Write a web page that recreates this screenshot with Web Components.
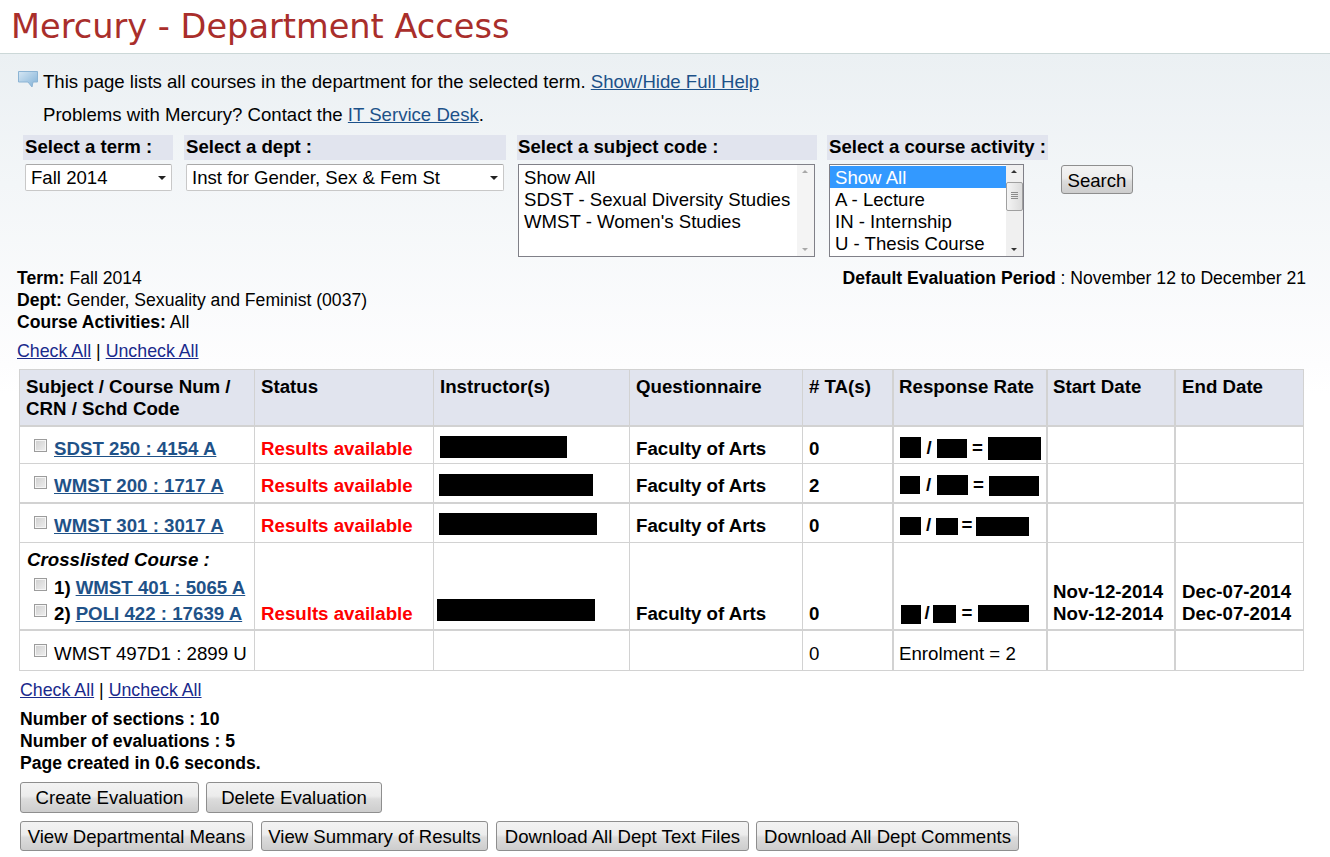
<!DOCTYPE html>
<html lang="en">
<head>
<meta charset="utf-8">
<title>Mercury - Department Access</title>
<style>
    html, body{ margin: 0; background: #fff; }
    body{ font: 18.6px/22px "Liberation Sans", Arial, sans-serif; color: #000; }
    .r{ color: #f00; font-weight: bold; }
    .b{ font-weight: bold; }
</style>
</head>
<body>

<mer-header>Mercury - Department Access</mer-header>

<mer-page>
    <mer-help></mer-help>

    <mer-filters>
        <mer-field label="Select a term :" style="--w:150px;--in:2px;">
            <mer-select style="--w:147px;">Fall 2014</mer-select>
        </mer-field>
        <mer-field label="Select a dept :" style="--w:322px;--in:2px;margin-left:11px;">
            <mer-select style="--w:318px;">Inst for Gender, Sex &amp; Fem St</mer-select>
        </mer-field>
        <mer-field label="Select a subject code :" style="--w:300px;--in:1px;margin-left:11px;">
            <mer-listbox style="--w:297px;">
                <div>Show All</div>
                <div>SDST - Sexual Diversity Studies</div>
                <div>WMST - Women's Studies</div>
            </mer-listbox>
        </mer-field>
        <mer-field label="Select a course activity :" style="--w:221px;--in:2px;margin-left:10px;">
            <mer-listbox active style="--w:195px;">
                <div>Show All</div>
                <div>A - Lecture</div>
                <div>IN - Internship</div>
                <div>U - Thesis Course</div>
            </mer-listbox>
        </mer-field>
        <mer-button style="--w:72px;--h:29px;--pt:2px;margin:30px 0 0 13px;">Search</mer-button>
    </mer-filters>

    <mer-summary></mer-summary>

    <mer-checks style="margin:7px 0 7px 17px;"></mer-checks>

    <mer-table>
        <mer-row head>
            <mer-cell>Subject / Course Num / CRN / Schd Code</mer-cell>
            <mer-cell>Status</mer-cell>
            <mer-cell>Instructor(s)</mer-cell>
            <mer-cell>Questionnaire</mer-cell>
            <mer-cell>#&nbsp;TA(s)</mer-cell>
            <mer-cell>Response Rate</mer-cell>
            <mer-cell>Start Date</mer-cell>
            <mer-cell>End Date</mer-cell>
        </mer-row>

        <mer-row style="--h:37px;">
            <mer-cell><mer-course link>SDST 250 : 4154 A</mer-course></mer-cell>
            <mer-cell class="r">Results available</mer-cell>
            <mer-cell><mer-block style="--w:127px;--h:22px;--x:0px;--y:-2px;"></mer-block></mer-cell>
            <mer-cell class="b">Faculty of Arts</mer-cell>
            <mer-cell class="b">0</mer-cell>
            <mer-cell><mer-rate bars="21,21,0 30,19,2 53,23,0" gaps="16,5"></mer-rate></mer-cell>
            <mer-cell></mer-cell>
            <mer-cell></mer-cell>
        </mer-row>

        <mer-row style="--h:40px;--line:2px;">
            <mer-cell><mer-course link>WMST 200 : 1717 A</mer-course></mer-cell>
            <mer-cell class="r">Results available</mer-cell>
            <mer-cell><mer-block style="--w:154px;--h:22px;--x:-1px;--y:-1px;"></mer-block></mer-cell>
            <mer-cell class="b">Faculty of Arts</mer-cell>
            <mer-cell class="b">2</mer-cell>
            <mer-cell><mer-rate bars="20,18,2 31,20,1 50,20,2" gaps="17,5"></mer-rate></mer-cell>
            <mer-cell></mer-cell>
            <mer-cell></mer-cell>
        </mer-row>

        <mer-row style="--h:39px;">
            <mer-cell><mer-course link>WMST 301 : 3017 A</mer-course></mer-cell>
            <mer-cell class="r">Results available</mer-cell>
            <mer-cell><mer-block style="--w:158px;--h:22px;--x:-1px;--y:-2px;"></mer-block></mer-cell>
            <mer-cell class="b">Faculty of Arts</mer-cell>
            <mer-cell class="b">0</mer-cell>
            <mer-cell><mer-rate bars="21,18,3 22,17,4 53,19,3" gaps="15,3.5"></mer-rate></mer-cell>
            <mer-cell></mer-cell>
            <mer-cell></mer-cell>
        </mer-row>

        <mer-row style="--h:88px;--line:2px;">
            <mer-cell style="--pad:6px;">
                <div class="b" style="font-style:italic;margin:0 0 6px 1px;">Crosslisted Course :</div>
                <mer-course link num="1)" style="margin-bottom:4px;">WMST 401 : 5065 A</mer-course>
                <mer-course link num="2)">POLI 422 : 17639 A</mer-course>
            </mer-cell>
            <mer-cell bottom class="r">Results available</mer-cell>
            <mer-cell bottom><mer-block style="--w:158px;--h:22px;--x:-3px;--y:0px;--b:4px;"></mer-block></mer-cell>
            <mer-cell bottom class="b">Faculty of Arts</mer-cell>
            <mer-cell bottom class="b">0</mer-cell>
            <mer-cell bottom><mer-rate bars="20,19,3 23,18,3 51,17,3" gaps="12,5.5" style="margin:0 0 1px 2px;"></mer-rate></mer-cell>
            <mer-cell bottom class="b">Nov-12-2014<br>Nov-12-2014</mer-cell>
            <mer-cell bottom class="b">Dec-07-2014<br>Dec-07-2014</mer-cell>
        </mer-row>

        <mer-row style="--h:40px;--pad:12px;">
            <mer-cell><mer-course>WMST 497D1 : 2899 U</mer-course></mer-cell>
            <mer-cell></mer-cell>
            <mer-cell></mer-cell>
            <mer-cell></mer-cell>
            <mer-cell>0</mer-cell>
            <mer-cell>Enrolment = 2</mer-cell>
            <mer-cell></mer-cell>
            <mer-cell></mer-cell>
        </mer-row>
    </mer-table>

    <mer-checks style="margin:8px 0 7px 20px;"></mer-checks>

    <mer-counts>
        <div>Number of sections : 10</div>
        <div>Number of evaluations : 5</div>
        <div>Page created in 0.6 seconds.</div>
    </mer-counts>

    <mer-toolbar style="--gap:7px;margin-top:8px;">
        <mer-button style="--w:179px;--h:31px;">Create Evaluation</mer-button>
        <mer-button style="--w:176px;--h:31px;">Delete Evaluation</mer-button>
    </mer-toolbar>
    <mer-toolbar style="--gap:8px;--pt:2px;margin-top:8px;">
        <mer-button style="--w:233px;--h:30px;">View Departmental Means</mer-button>
        <mer-button style="--w:227px;--h:30px;">View Summary of Results</mer-button>
        <mer-button style="--w:253px;--h:30px;">Download All Dept Text Files</mer-button>
        <mer-button style="--w:263px;--h:30px;margin-left:-1px;">Download All Dept Comments</mer-button>
    </mer-toolbar>
</mer-page>

<script>
/* Small helper, every element below is just a style string and some markup */
function shadow(el, html){
    el.attachShadow({mode: "open"});
    el.shadowRoot.innerHTML = html;
}

class MerHeader extends HTMLElement{
    constructor(){
        super();
        shadow(this, `
            <style>
                :host{
                    display: block;
                    height: 54px;
                    box-sizing: border-box;
                    padding: 7px 0 0 11px;
                    background: #fff;
                    border-bottom: 1px solid #ccd8d8;
                    font: 33.6px/40px "DejaVu Sans", Verdana, sans-serif;
                    color: #a92e2b;
                }
            </style>
            <slot></slot>
        `);
    };
};

class MerPage extends HTMLElement{
    constructor(){
        super();
        shadow(this, `
            <style>
                :host{
                    display: block;
                    padding-top: 17px;
                    background: linear-gradient(#ebf0f3 0, #f3f6f8 130px, #fdfdfe 310px, #fff 340px);
                }
            </style>
            <slot></slot>
        `);
    };
};

class MerHelp extends HTMLElement{
    constructor(){
        super();
        shadow(this, `
            <style>
                :host{ display: block; padding-left: 18px; }
                .row{ display: flex; height: 22px; }
                svg{ width: 20px; height: 17px; margin-right: 5px; flex: none; }
                .second{ margin: 11px 0 9px 25px; }
                a{ color: #1c5189; text-decoration: underline; }
            </style>
            <div class="row">
                <svg viewBox="0 0 20 17">
                    <defs>
                        <linearGradient id="bub" x1="0" y1="0" x2="1" y2="1">
                            <stop offset="0" stop-color="#d6e7f4"/>
                            <stop offset="1" stop-color="#7fb0d6"/>
                        </linearGradient>
                    </defs>
                    <path d="M.5 .5H19.5V11H15L14 16 10 11H.5Z" fill="url(#bub)" stroke="#8cb4d4" stroke-width="1" stroke-linejoin="round"/>
                </svg>
                <span>This page lists all courses in the department for the selected term. <a href="#">Show/Hide Full Help</a></span>
            </div>
            <div class="second">Problems with Mercury? Contact the <a href="#">IT Service Desk</a>.</div>
        `);
    };
};

class MerFilters extends HTMLElement{
    constructor(){
        super();
        shadow(this, `
            <style>
                :host{ display: flex; align-items: flex-start; padding-left: 23px; height: 132px; }
            </style>
            <slot></slot>
        `);
    };
};

class MerField extends HTMLElement{
    constructor(){
        super();
        shadow(this, `
            <style>
                :host{ display: block; width: var(--w); flex: none; }
                .label{
                    height: 25px;
                    box-sizing: border-box;
                    padding: 1px 0 0 var(--in);
                    background: #e1e4ee;
                    font-weight: bold;
                    white-space: nowrap;
                }
                .control{ padding: 4px 0 0 var(--in); }
            </style>
            <div class="label">${this.getAttribute("label")}</div>
            <div class="control"><slot></slot></div>
        `);
    };
};

class MerSelect extends HTMLElement{
    constructor(){
        super();
        shadow(this, `
            <style>
                :host{
                    display: flex;
                    align-items: center;
                    position: relative;
                    box-sizing: border-box;
                    width: var(--w);
                    height: 27px;
                    padding-left: 5px;
                    background: #fff;
                    border: 1px solid #c8c8c8;
                    border-top-color: #a8a8a8;
                    border-radius: 2px;
                    white-space: nowrap;
                }
                .caret{
                    position: absolute;
                    right: 5px;
                    top: 11px;
                    border: 4px solid transparent;
                    border-top-color: #222;
                    border-bottom: 0;
                }
            </style>
            <slot></slot>
            <span class="caret"></span>
        `);
    };
};

class MerListbox extends HTMLElement{
    constructor(){
        super();
        const active = this.hasAttribute("active");
        const arrow = active ? "#333" : "#a8a8a8";
        shadow(this, `
            <style>
                :host{
                    display: flex;
                    box-sizing: border-box;
                    width: var(--w);
                    height: 93px;
                    background: #fff;
                    border: 1px solid #808088;
                    white-space: nowrap;
                    overflow: hidden;
                }
                .items{ flex: 1; min-width: 0; padding-top: 1px; }
                ::slotted(div){ height: 22px; line-height: 24px; padding-left: 5px; }
                ::slotted(div:first-child){ ${active ? "background:#3399ff;color:#fff;" : ""} }
                .bar{
                    position: relative;
                    flex: none;
                    width: 17px;
                    background: ${active ? "#f0f0f0" : "#f4f4f4"};
                }
                .up, .down{
                    position: absolute;
                    left: 5px;
                    border: 3.5px solid transparent;
                }
                .up{ top: 5px; border-bottom-color: ${arrow}; border-top: 0; }
                .down{ bottom: 5px; border-top-color: ${arrow}; border-bottom: 0; }
                .thumb{
                    position: absolute;
                    left: 0;
                    top: 17px;
                    width: 15px;
                    height: 27px;
                    border: 1px solid #a0a0a0;
                    border-radius: 2px;
                    background: linear-gradient(90deg, #f4f4f4, #dcdcdc);
                }
                .thumb i{
                    display: block;
                    width: 7px;
                    height: 1px;
                    margin: 1px auto 0;
                    background: #8c8c8c;
                }
                .thumb i:first-child{ margin-top: 9px; }
            </style>
            <div class="items"><slot></slot></div>
            <div class="bar">
                <span class="up"></span>
                ${active ? "<div class='thumb'><i></i><i></i><i></i><i></i></div>" : ""}
                <span class="down"></span>
            </div>
        `);
    };
};

class MerButton extends HTMLElement{
    constructor(){
        super();
        shadow(this, `
            <style>
                :host{
                    display: flex;
                    align-items: center;
                    justify-content: center;
                    box-sizing: border-box;
                    flex: none;
                    width: var(--w);
                    height: var(--h);
                    padding-top: var(--pt, 0);
                    background: linear-gradient(#f3f3f3, #ececec 45%, #dcdcdc 55%, #cdcdcd);
                    border: 1px solid #8e8e8e;
                    border-radius: 3px;
                    white-space: nowrap;
                }
            </style>
            <slot></slot>
        `);
    };
};

class MerSummary extends HTMLElement{
    constructor(){
        super();
        shadow(this, `
            <style>
                :host{ display: flex; justify-content: space-between; padding: 0 24px 0 17px; font-size: 17.6px; }
                b{ font-weight: bold; }
            </style>
            <div>
                <div><b>Term:</b> Fall 2014</div>
                <div><b>Dept:</b> Gender, Sexuality and Feminist (0037)</div>
                <div><b>Course Activities:</b> All</div>
            </div>
            <div><b>Default Evaluation Period</b> : November 12 to December 21</div>
        `);
    };
};

class MerChecks extends HTMLElement{
    constructor(){
        super();
        shadow(this, `
            <style>
                :host{ display: block; font-size: 17.8px; }
                a{ color: #1a2a8c; text-decoration: underline; }
            </style>
            <a href="#">Check All</a> | <a href="#">Uncheck All</a>
        `);
    };
};

class MerTable extends HTMLElement{
    constructor(){
        super();
        shadow(this, `
            <style>
                :host{
                    display: block;
                    box-sizing: border-box;
                    width: 1285px;
                    margin-left: 19px;
                    background: #fff;
                    border-top: 1px solid #d2d2d2;
                    border-right: 1px solid #d2d2d2;
                    font-size: 18.7px;
                }
            </style>
            <slot></slot>
        `);
    };
};

class MerRow extends HTMLElement{
    constructor(){
        super();
        shadow(this, `
            <style>
                :host{
                    display: grid;
                    grid-template-columns: 235px 179px 196px 173px 90px 154px 128px 129px;
                    box-sizing: border-box;
                    height: var(--h, 37px);
                    border-bottom: var(--line, 1px) solid #d2d2d2;
                }
                :host([head]){
                    height: 57px;
                    border-bottom-width: 2px;
                    background: #e1e4ee;
                    font-weight: bold;
                    --pad: 6px;
                }
            </style>
            <slot></slot>
        `);
    };
};

class MerCell extends HTMLElement{
    constructor(){
        super();
        shadow(this, `
            <style>
                :host{
                    display: block;
                    box-sizing: border-box;
                    min-width: 0;
                    padding: var(--pad, 11px) 0 0 6px;
                    border-left: 1px solid #d2d2d2;
                }
                :host(:nth-child(n+6)){ border-left-width: 2px; padding-left: 5px; }
                :host(:nth-child(8)){ padding-left: 6px; }
                :host([bottom]){
                    display: flex;
                    align-items: flex-end;
                    padding-top: 0;
                    padding-bottom: 4px;
                }
            </style>
            <div><slot></slot></div>
        `);
    };
};

class MerCourse extends HTMLElement{
    constructor(){
        super();
        const num = this.getAttribute("num");
        const label = this.hasAttribute("link") ? "<a href='#'><slot></slot></a>" : "<slot></slot>";
        shadow(this, `
            <style>
                :host{ display: flex; height: 22px; padding-left: 8px; white-space: nowrap; }
                .box{
                    box-sizing: border-box;
                    flex: none;
                    width: 13px;
                    height: 13px;
                    margin: 1px 7px 0 0;
                    border: 1px solid #9c9c9c;
                    background: linear-gradient(135deg, #cfcfcf, #efefef);
                    box-shadow: inset 0 0 0 1px #f6f6f6;
                }
                a{ color: #1f5288; font-weight: bold; text-decoration: underline; }
                b{ margin-right: 5px; }
            </style>
            <span class="box"></span>
            ${num ? "<b>" + num + "</b>" : ""}
            <span>${label}</span>
        `);
    };
};

class MerBlock extends HTMLElement{
    constructor(){
        super();
        shadow(this, `
            <style>
                :host{
                    display: block;
                    width: var(--w);
                    height: var(--h);
                    margin: var(--y) 0 var(--b, 0) var(--x);
                    background: #000;
                }
            </style>
        `);
    };
};

/* bars = "width,height,offset" for the three hidden figures */
class MerRate extends HTMLElement{
    constructor(){
        super();
        const bars = this.getAttribute("bars").split(" ").map((b) => b.split(","));
        const gaps = this.getAttribute("gaps").split(",");
        const bar = (b) => `<i style="width:${b[0]}px;height:${b[1]}px;margin-top:${b[2]}px;"></i>`;
        shadow(this, `
            <style>
                :host{ display: flex; align-items: flex-start; margin: -1px 0 0 1px; font-weight: bold; white-space: nowrap; }
                i{ display: block; flex: none; background: #000; }
                span{ flex: none; text-align: center; }
            </style>
            ${bar(bars[0])}
            <span style="width:${gaps[0]}px;">/</span>
            ${bar(bars[1])}
            <span style="margin:0 ${gaps[1]}px;">=</span>
            ${bar(bars[2])}
        `);
    };
};

class MerCounts extends HTMLElement{
    constructor(){
        super();
        shadow(this, `
            <style>
                :host{ display: block; padding-left: 20px; font-size: 17.6px; font-weight: bold; }
            </style>
            <slot></slot>
        `);
    };
};

class MerToolbar extends HTMLElement{
    constructor(){
        super();
        shadow(this, `
            <style>
                :host{ display: flex; gap: var(--gap); padding-left: 20px; }
            </style>
            <slot></slot>
        `);
    };
};

window.customElements.define("mer-header", MerHeader);
window.customElements.define("mer-page", MerPage);
window.customElements.define("mer-help", MerHelp);
window.customElements.define("mer-filters", MerFilters);
window.customElements.define("mer-field", MerField);
window.customElements.define("mer-select", MerSelect);
window.customElements.define("mer-listbox", MerListbox);
window.customElements.define("mer-button", MerButton);
window.customElements.define("mer-summary", MerSummary);
window.customElements.define("mer-checks", MerChecks);
window.customElements.define("mer-table", MerTable);
window.customElements.define("mer-row", MerRow);
window.customElements.define("mer-cell", MerCell);
window.customElements.define("mer-course", MerCourse);
window.customElements.define("mer-block", MerBlock);
window.customElements.define("mer-rate", MerRate);
window.customElements.define("mer-counts", MerCounts);
window.customElements.define("mer-toolbar", MerToolbar);
</script>
</body>
</html>
